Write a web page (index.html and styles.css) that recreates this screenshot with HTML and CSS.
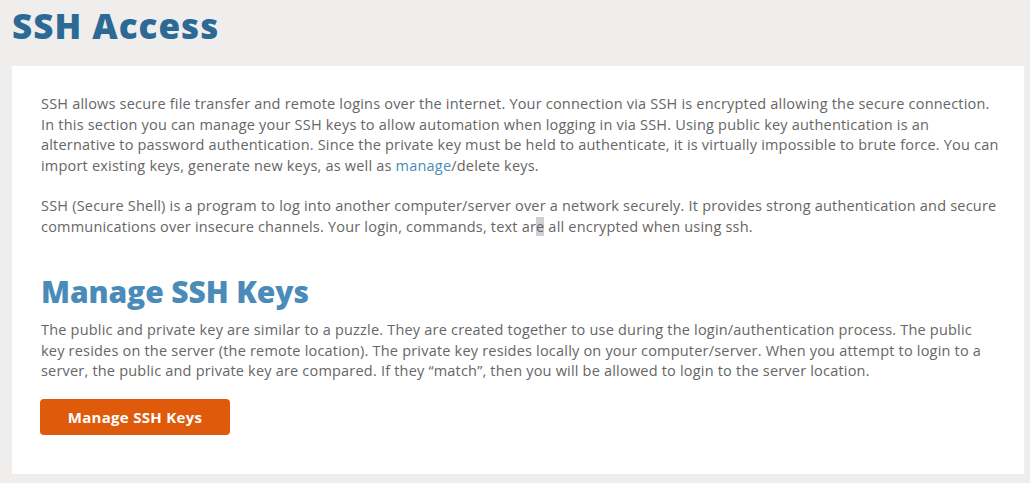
FILE: index.html
```html
<!DOCTYPE html>
<html>
<head>
<meta charset="utf-8">
<link rel="stylesheet" href="styles.css">
</head>
<body>
<h1 class="page-title">SSH Access</h1>
<div class="card">
  <p class="text">SSH allows secure file transfer and remote logins over the internet. Your connection via SSH is encrypted allowing the secure connection. In this section you can manage your SSH keys to allow automation when logging in via SSH. Using public key authentication is an alternative to password authentication. Since the private key must be held to authenticate, it is virtually impossible to brute force. You can import existing keys, generate new keys, as well as <a class="link" href="#">manage</a>/delete keys.</p>
  <p class="text">SSH (Secure Shell) is a program to log into another computer/server over a network securely. It provides strong authentication and secure communications over insecure channels. Your login, commands, text ar<span class="sel">e</span> all encrypted when using ssh.</p>
  <h2 class="section-title">Manage SSH Keys</h2>
  <p class="text tight">The public and private key are similar to a puzzle. They are created together to use during the login/authentication process. The public key resides on the server (the remote location). The private key resides locally on your computer/server. When you attempt to login to a server, the public and private key are compared. If they “match”, then you will be allowed to login to the server location.</p>
  <button class="btn">Manage SSH Keys</button>
</div>
</body>
</html>
```
FILE: styles.css
```css
html, body { margin: 0; padding: 0; }
body {
  background: #efeeed;
  font-family: "Open Sans", "Liberation Sans", sans-serif;
  width: 1030px;
  height: 483px;
  overflow: hidden;
}
.page-title {
  margin: 0;
  padding: 4px 0 0 12px;
  height: 62px;
  box-sizing: border-box;
  font-family: "Open Sans", sans-serif;
  font-weight: 800;
  font-size: 35px;
  line-height: 44px;
  color: #2c6a95;
  letter-spacing: 1px;
}
.card {
  margin: 4px 6px 0 12px;
  background: #fff;
  height: 408px;
  box-sizing: border-box;
  padding: 28px 25px 0 29px;
}
.text {
  margin: 0 0 20px 0;
  font-size: 14.5px;
  letter-spacing: 0.2px;
  line-height: 20.5px;
  color: #666;
}
.text.tight { margin-bottom: 17px; }
.link { color: #4a8ab8; text-decoration: none; }
.sel { background: #cfcfcf; }
.section-title {
  margin: 36px 0 9px 0;
  font-family: "Open Sans", sans-serif;
  font-weight: 800;
  font-size: 30px;
  line-height: 38px;
  color: #4a8bb9;
  letter-spacing: -0.1px;
}
.btn {
  display: block;
  width: 190px;
  height: 36px;
  border: none;
  border-radius: 4px;
  background: #e05a0c;
  color: #fff;
  font-family: "Open Sans", sans-serif;
  font-weight: 700;
  font-size: 15px;
  letter-spacing: 0.3px;
  margin-left: -1px;
}
```
